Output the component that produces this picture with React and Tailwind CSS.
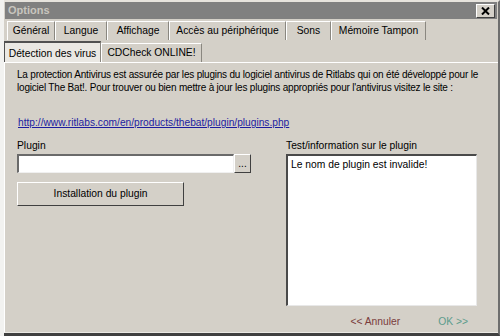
const tabsTop = [
  { label: "Général", w: 48 },
  { label: "Langue", w: 52 },
  { label: "Affichage", w: 62 },
  { label: "Accès au périphérique", w: 117 },
  { label: "Sons", w: 45 },
  { label: "Mémoire Tampon", w: 95 },
];

const App = () => {
  return (
    <div
      className="w-[500px] h-[336px] bg-[#f2f2f0] overflow-hidden text-black"
      style={{ fontFamily: '"Liberation Sans", Arial, sans-serif' }}
    >
      <div className="ml-[4px] h-full flex flex-col bg-[#d4d0c8] border-t-2 border-[#e6e3dd] border-r-2 border-r-[#6e6e6e] border-b-[3px] border-b-[#404040]">
        {/* title bar */}
        <div className="h-[17px] mx-[1px] bg-[#808080] flex items-center justify-between pl-[3px] pr-[2px]">
          <span className="text-[11px] font-bold text-[#c8c5be] leading-none">Options</span>
          <div className="w-[19px] h-[14px] bg-[#d4d0c8] border border-t-white border-l-white border-r-[#404040] border-b-[#404040] flex items-center justify-center">
            <svg width="9" height="8" viewBox="0 0 9 8">
              <path d="M1 0.5 L8 7.5 M8 0.5 L1 7.5" stroke="#000" strokeWidth="2" />
            </svg>
          </div>
        </div>

        {/* tabs row 1 */}
        <div className="h-[20px] flex items-end pl-[3px] mt-[1px]">
          {tabsTop.map((t) => (
            <div
              key={t.label}
              className="h-[19px] flex items-center justify-center text-[10.3px] border-l border-l-white border-r border-r-[#8a8780] border-t border-t-white"
              style={{ width: t.w }}
            >
              {t.label}
            </div>
          ))}
        </div>

        {/* tabs row 2 */}
        <div className="h-[22px] flex items-end relative z-10">
          <div className="w-[97px] h-[21px] flex items-center justify-center pt-[2px] text-[10.3px] bg-[#eae8e3] border-t-2 border-t-[#505050] border-l border-l-[#505050] border-r border-r-[#8a8780]">
            Détection des virus
          </div>
          <div className="w-[101px] h-[19px] flex items-center justify-center text-[10.3px] border-l border-l-white border-r border-r-[#8a8780] border-t border-t-white">
            CDCheck ONLINE!
          </div>
        </div>

        {/* panel */}
        <div className="flex-1 border-l border-l-white border-t border-t-white border-b border-b-[#ebe9e4] flex flex-col pl-[12px] pr-[8px] pt-[5px]">
          <p className="text-[10px] leading-[13px] tracking-[-0.2px] whitespace-nowrap">
            La protection Antivirus est assurée par les plugins du logiciel antivirus de Ritlabs qui on été développé pour le
            <br />
            logiciel The Bat!. Pour trouver ou bien mettre à jour les plugins appropriés pour l'antivirus visitez le site :
          </p>
          <a className="mt-[22px] ml-[1px] text-[10.2px] leading-[13px] text-[#1c1ca0] underline w-fit">
            http://www.ritlabs.com/en/products/thebat/plugin/plugins.php
          </a>

          <div className="flex mt-[10px]">
            <div className="w-[269px] flex flex-col">
              <span className="text-[10.3px] leading-[13px]">Plugin</span>
              <div className="flex mt-[2px]">
                <div className="w-[217px] h-[19px] bg-white border-t-2 border-l-2 border-t-[#6a6a6a] border-l-[#6a6a6a] border-r border-b border-r-[#f0f0f0] border-b-[#f0f0f0]" />
                <div className="w-[17px] h-[19px] bg-[#d4d0c8] border border-t-white border-l-white border-r-[#404040] border-b-[#404040] flex items-end justify-center pb-[3px] text-[10px] leading-none">
                  ...
                </div>
              </div>
              <div className="mt-[9px] w-[167px] h-[24px] border border-t-white border-l-white border-r-[#404040] border-b-[#404040] flex items-center justify-center text-[10.3px]">
                Installation du plugin
              </div>
            </div>

            <div className="flex flex-col">
              <span className="text-[10.3px] leading-[13px]">Test/information sur le plugin</span>
              <div className="mt-[2px] w-[191px] h-[152px] bg-white border-t-2 border-l-2 border-t-[#4a4a4a] border-l-[#4a4a4a] border-r border-b border-r-[#e8e8e8] border-b-[#e8e8e8] px-[3px] pt-[2px] text-[10.3px] leading-[13px]">
                Le nom de plugin est invalide!
              </div>
            </div>
          </div>

          <div className="flex justify-end gap-[38px] pr-[22px] mt-[9px] text-[10.3px] leading-[13px]">
            <span className="text-[#7a3c3c]">&lt;&lt; Annuler</span>
            <span className="text-[#5c9c8c]">OK &gt;&gt;</span>
          </div>
        </div>
      </div>
    </div>
  );
};

export default App;
